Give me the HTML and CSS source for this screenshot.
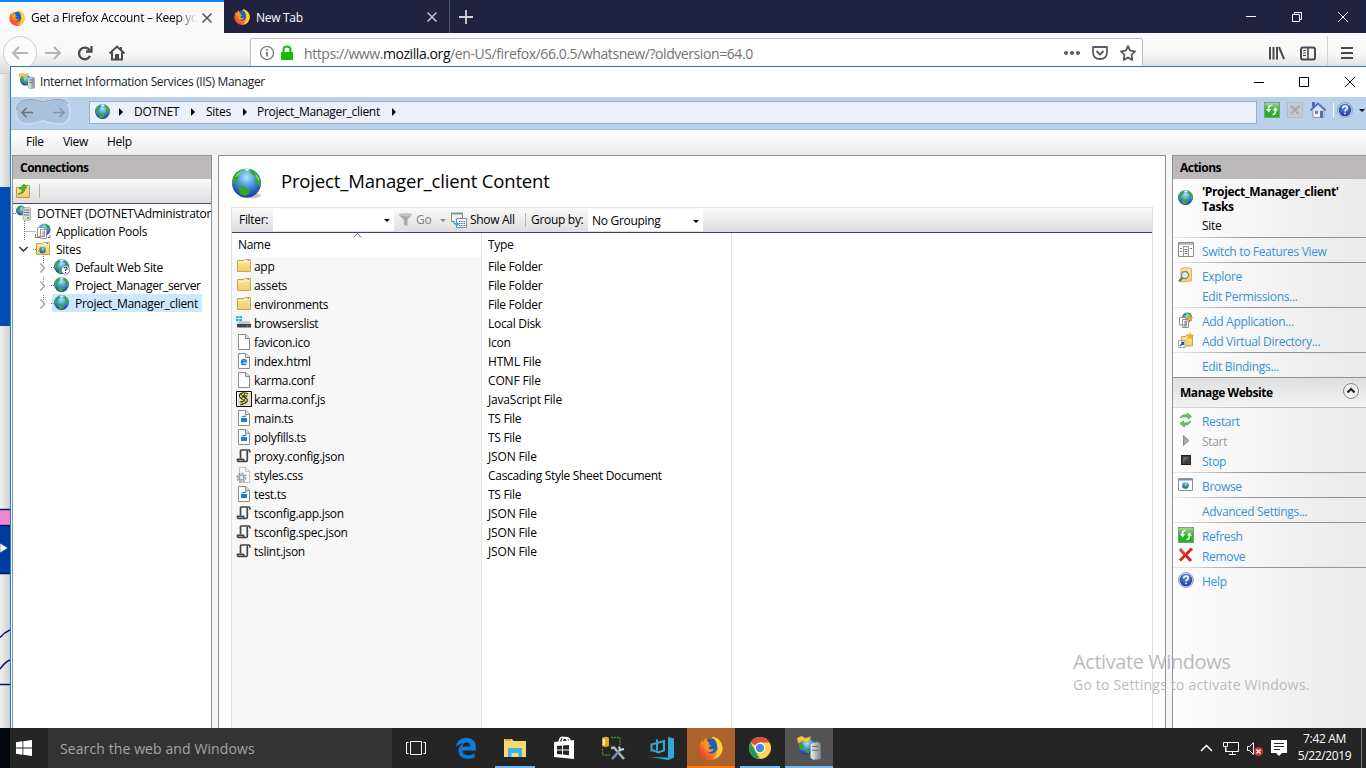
FILE: index.html
```html
<!DOCTYPE html>
<html lang="en">
<head>
<meta charset="utf-8">
<title>Internet Information Services (IIS) Manager</title>
<link rel="stylesheet" href="styles.css">
</head>
<body>
<svg class="defs" width="0" height="0" aria-hidden="true">
  <defs>
    <radialGradient id="gSea" cx=".5" cy=".3" r=".75"><stop offset="0" stop-color="#a5e6f8"/><stop offset=".45" stop-color="#4a93dc"/><stop offset="1" stop-color="#10279a"/></radialGradient>
    <linearGradient id="gFox" x1="1" y1="0" x2="0" y2="1"><stop offset="0" stop-color="#ffe226"/><stop offset=".45" stop-color="#ff9a1c"/><stop offset="1" stop-color="#f0203c"/></linearGradient>
    <linearGradient id="gFold" x1="0" y1="0" x2="0" y2="1"><stop offset="0" stop-color="#fbe7a0"/><stop offset="1" stop-color="#f0cb6d"/></linearGradient>
    <linearGradient id="gGreen" x1="0" y1="0" x2="0" y2="1"><stop offset="0" stop-color="#a8dc9e"/><stop offset=".5" stop-color="#2fae2b"/><stop offset="1" stop-color="#14b81a"/></linearGradient>
    <radialGradient id="gHelp" cx=".5" cy=".3" r=".7"><stop offset="0" stop-color="#6d96e4"/><stop offset="1" stop-color="#14379c"/></radialGradient>
    <linearGradient id="gSrv" x1="0" y1="0" x2="1" y2="0"><stop offset="0" stop-color="#eef1f3"/><stop offset="1" stop-color="#7f898f"/></linearGradient>
  </defs>
  <symbol id="globe" viewBox="0 0 16 16"><circle cx="7.500" cy="7.500" r="7.500" fill="url(#gSea)"/><path d="M.8 6Q2 2.500 5 1L6 2.500 4.500 5 3 6.500 2.500 9.500 .8 9ZM9.500 .8Q14 2.500 14.800 7L14 10 12 8.500 11 6 11.500 4 9.500 3ZM3.500 9.500L6.500 9 10 11.500 8 14 5 14Z" fill="#3aa939"/><path d="M6 .8L9 .6 9.500 1.800 7 2.600Z" fill="#e9f9ee"/></symbol>
  <symbol id="bigglobe" viewBox="0 0 32 32"><ellipse cx="18" cy="27.500" rx="11" ry="3" fill="#c4c4c4"/><circle cx="14.500" cy="15" r="14.500" fill="url(#gSea)"/><path d="M.5 13Q1 5 9 1.500L10 4 7 7 6 11 4 15 .5 16ZM18 1Q22 2 26 7L28.500 12 28.800 17 27.500 20 26 16 23 14 24 9 21 7 18 4ZM6 19L11 18 18 22 17 26 12 28 8 26Z" fill="#37a52b"/><path d="M3 9Q6 4 10 2L9 5 5 9ZM23 5L27 10 27 13 24 9Z" fill="#7fdc4b"/><path d="M12 .8L17 .8 16 3 14 2.500Z" fill="#fff"/></symbol>
  <symbol id="server" viewBox="0 0 16 16"><circle cx="5" cy="5.500" r="5" fill="url(#gSea)"/><path d="M1 3Q3 0 6 .8L4 4 2 7ZM5 8L7 6V10L5 10Z" fill="#37a52b"/><path d="M7 3L13 2 14.500 3V15L9 16 7 14Z" fill="#d4dadd" stroke="#8b969c" stroke-width=".6"/><path d="M8 5H13.500M8 7.500H13.500M8 10H13.500" stroke="#6d7a81"/><path d="M11 13H13" stroke="#3fae39" stroke-width="1.500"/></symbol>
  <symbol id="iis" viewBox="0 0 16 16"><circle cx="6.500" cy="7" r="5.500" fill="url(#gSea)"/><path d="M1.200 6L3 4 5 7 3 10ZM5 10L8 8V12Z" fill="#37a52b"/><path d="M0 1.500L3 0 5.500 1.500 9 .3 8.500 3 6 4.500 3.500 3 1 5Z" fill="#f7c740" stroke="#c9912a" stroke-width=".4"/><path d="M9 5L13 4 15.500 5V15L11 16 9 14.500Z" fill="url(#gSrv)" stroke="#8b969c" stroke-width=".5"/><path d="M10 7H14M10 9.500H14" stroke="#5f6d75" stroke-width=".8"/></symbol>
  <symbol id="fox" viewBox="0 0 16 16"><path d="M9.500 .3Q15.700 2.500 15.700 8.300A7.700 7.500 0 0 1 .3 8.500Q.2 5 2 2.500L2.800 4Q3.500 2 5 1.300 5 3 6 3.500Z" fill="url(#gFox)"/><path d="M5.500 2.800Q7.500 .8 10.500 2.300 13 5 12.300 8.500 11.300 11.500 8.300 11.800 5.500 11.500 4.800 8.500Z" fill="#1c5fc4"/><path d="M2.800 4.200L5 3.600 6.800 4 6.300 5.600 8.300 6.300 6.300 7.600 7 9 9.800 8.700Q9 11.300 6 10.500 3.300 9 2.800 4.200Z" fill="#ff9520"/><path d="M9.500 .3Q16.200 3 15.600 9 14.300 14.800 9 15.700 12.800 12.500 12.500 8 12 4 9.500 .3Z" fill="#ffd032"/></symbol>
  <symbol id="folder" viewBox="0 0 16 16"><path d="M1.500 2.500H8L9 1.500H14.500V13.500H1.500Z" fill="url(#gFold)" stroke="#cda447"/><path d="M9.500 2.500H14" stroke="#fff"/><path d="M11.500 2.500H13" stroke="#4a90c4"/><path d="M2 4.500H8.500L10 3.500H14" stroke="#fdf3c9" fill="none"/></symbol>
  <symbol id="file" viewBox="0 0 16 16"><path d="M2.500 .5H10L13.500 4V15.500H2.500Z" fill="#fff" stroke="#8b8b8b"/><path d="M9.500 .5V4.500H13.500" fill="#ddd" stroke="#8b8b8b"/></symbol>
  <symbol id="html" viewBox="0 0 16 16"><use href="#file"/><path d="M5.300 8.700H10.300Q10 6.500 8 6.500 6 6.500 5.600 8.700 5.600 11.500 8 11.500 9.300 11.500 10.200 10.800" fill="none" stroke="#147fd7" stroke-width="1.700"/></symbol>
  <symbol id="ts" viewBox="0 0 16 16"><use href="#file"/><path d="M5 8H11V12H5ZM4.800 6.700L10.500 5.300V6.600L6.800 7.400Z" fill="#147fd7"/></symbol>
  <symbol id="json" viewBox="0 0 16 16"><path d="M4.500 10.500V3Q4.500 2 6 2H13Q14 2 14 4.500" fill="none" stroke="#444" stroke-width="1.700"/><path d="M11.300 2.500V12Q11.300 13.500 10 13.500H2.500Q1.500 13.500 1.500 11.300H7.500Q7.500 13.500 9 13.500" fill="none" stroke="#444" stroke-width="1.700"/></symbol>
  <symbol id="js" viewBox="0 0 16 16"><path d="M.5 .5H15.500V15.500H.5Z" fill="#e5e2d4" stroke="#111"/><path d="M1.500 14.500V1.500H14.500" fill="none" stroke="#fff"/><path d="M11.500 4Q5 2 5 5 6 7 9.500 8.500 11 11 4 12.500" fill="none" stroke="#222" stroke-width="4"/><path d="M11.500 4Q5 2 5 5 6 7 9.500 8.500 11 11 4 12.500" fill="none" stroke="#e8df2e" stroke-width="2" stroke-dasharray="2.500 .7"/></symbol>
  <symbol id="css" viewBox="0 0 16 16"><path d="M3.500 .5H10L13.500 4V15.500H3.500Z" fill="#fafafa" stroke="#c0c0c0"/><path d="M9.500 .5V4.500H13.500" fill="#eee" stroke="#c0c0c0"/><circle cx="5.500" cy="10.500" r="4.300" fill="none" stroke="#929ba1" stroke-width="1.500" stroke-dasharray="2 1.300"/><circle cx="5.500" cy="10.500" r="2.600" fill="#e5eaed" stroke="#929ba1" stroke-width="1.400"/></symbol>
  <symbol id="disk" viewBox="0 0 16 16"><path d="M0 1H2.500V3.300H0ZM3.300 1H6V3.300H3.300ZM0 4H2.500V6.200H0ZM3.300 4H6V6.200H3.300Z" fill="#16b8ee"/><path d="M3 6H13L15 9H1Z" fill="#c9c9c9"/><path d="M1 9H15V12.500H1Z" fill="#454545"/><path d="M10.500 11H12.500" stroke="#46e04a"/></symbol>
  <symbol id="refresh" viewBox="0 0 16 16"><rect x=".5" y=".5" width="15" height="15" fill="url(#gGreen)" stroke="#7e9c84"/><path d="M7.500 3.300Q4 3.500 4.700 7.500M8.500 12.500Q12 12.500 11.300 8" fill="none" stroke="#fff" stroke-width="1.700"/><path d="M1.800 7L4.800 10.500 7.300 7ZM8.700 8.500L11.300 5.300 14.200 8.500Z" fill="#fff"/></symbol>
  <symbol id="help" viewBox="0 0 16 16"><circle cx="8" cy="8" r="7.500" fill="#dce4f2" stroke="#7682a0" stroke-width=".7"/><circle cx="8" cy="8" r="6.300" fill="url(#gHelp)"/><path d="M5.700 6.200Q5.800 4 8 4 10.300 4 10.300 6 10.300 7.300 8.800 8 8 8.500 8 9.500M8 10.800V12.300" fill="none" stroke="#fff" stroke-width="1.500"/></symbol>
</svg>

<main class="desktop">
  <section class="firefox">
    <div class="tabs">
      <div class="tab active"><svg class="i16"><use href="#fox"/></svg><span class="tab-title fade">Get a Firefox Account – Keep yo</span><svg class="tab-x" viewBox="0 0 10 10"><path d="M.5 .5L9.500 9.500M9.500 .5L.5 9.500"/></svg></div>
      <div class="tab second"><svg class="i16"><use href="#fox"/></svg><span class="tab-title">New Tab</span><svg class="tab-x" viewBox="0 0 10 10"><path d="M.5 .5L9.500 9.500M9.500 .5L.5 9.500"/></svg></div>
      <svg class="plus" viewBox="0 0 14 14"><path d="M7 0V14M0 7H14"/></svg>
      <svg class="fx-controls" viewBox="0 0 110 14"><path d="M0 6.500H10M46.500 4.500H53.500V11.500H46.500ZM48.500 4V2.500H55.500V9.500H54M92 2L102 12M102 2L92 12"/></svg>
    </div>
    <div class="fx-toolbar">
      <svg class="fx-nav" viewBox="0 0 130 34"><circle cx="20" cy="20" r="16.500" fill="#fbfbfb" stroke="#cfcfcf"/><path d="M28 20H13M19 14L13 20 19 26M45 20H60M54 14L60 20 54 26" fill="none" stroke="#b5b5b7" stroke-width="2"/><path d="M89.500 17A5.800 5.800 0 1 0 90 23M91.500 13V18.500H86" fill="none" stroke="#4a4a4f" stroke-width="2.300"/><path d="M109.500 20.500L117 13.500 124.500 20.500M112 19V26.500H122V19M121 14V17" fill="none" stroke="#4a4a4f" stroke-width="2"/><path d="M115 21H119V26H115Z" fill="#4a4a4f"/></svg>
      <div class="urlbar">
        <svg class="url-left" viewBox="0 0 36 16"><circle cx="7" cy="8" r="6.500" fill="none" stroke="#6b6b6f" stroke-width="1.200"/><path d="M7 7V11.500M7 4V5.500" stroke="#55555a" stroke-width="1.500"/><path d="M21 7H33V15H21Z" fill="#12bc00"/><path d="M23.500 8V5Q23.500 1.500 27 1.500T30.500 5V8" fill="none" stroke="#12bc00" stroke-width="2"/></svg>
        <span class="url">https://www.<b>mozilla.org</b>/en-US/firefox/66.0.5/whatsnew/?oldversion=64.0</span>
        <svg class="url-right" viewBox="0 0 74 18"><g fill="#5a5a5e"><circle cx="3" cy="8" r="2"/><circle cx="9" cy="8" r="2"/><circle cx="15" cy="8" r="2"/></g><path d="M30 2H44V7Q44 14 37 14T30 7ZM33.500 6L37 9.500 40.500 6M65 1L67.200 5.700 72 6.400 68.500 9.900 69.300 14.900 65 12.500 60.700 14.900 61.500 9.900 58 6.400 62.800 5.700Z" fill="none" stroke="#5a5a5e" stroke-width="1.800" stroke-linejoin="round"/></svg>
      </div>
      <svg class="fx-right" viewBox="0 0 98 34"><path d="M2 14V26.500M5.500 14V26.500M9 14V26.500M11 14L16 26" fill="none" stroke="#4a4a4f" stroke-width="2"/><rect x="33" y="14.500" width="14" height="12" rx="2" fill="none" stroke="#4a4a4f" stroke-width="2"/><path d="M40 14V26" stroke="#4a4a4f" stroke-width="1.600"/><path d="M35 17.500H38M35 20H38M35 22.500H38" stroke="#4a4a4f"/><path d="M59.500 3V34" stroke="#d2d2d3"/><path d="M73 15H85M73 20H85M73 25H85" stroke="#4a4a4f" stroke-width="2"/></svg>
    </div>
    <svg class="webpage" viewBox="0 0 10 655">
      <defs><linearGradient id="gShade"><stop offset="0" stop-color="#f1f1f1"/><stop offset="1" stop-color="#cfcfd1"/></linearGradient></defs>
      <path d="M0 0H10V655H0Z" fill="url(#gShade)"/><path d="M0 .5H10" stroke="#c9c9c9"/>
      <path d="M0 114H10V253H0Z" fill="#004db3"/><path d="M0 436H10V452H0Z" fill="#ee87d3"/><path d="M0 452H10V501H0Z" fill="#003c9c"/>
      <path d="M0 436.500H10M0 452.500H10M0 500.500H10M0 611.500H10" stroke="#00156c" stroke-width="1.500"/><path d="M0 470L8 475 0 480Z" fill="#fff" stroke="#00156c" stroke-width=".5"/>
      <path d="M0 564.500Q5 559 10 557M0 596Q5 589 10 587" fill="none" stroke="#00156c" stroke-width="1.500"/>
    </svg>
  </section>

  <section class="iis">
    <header class="titlebar"><svg class="i16"><use href="#iis"/></svg><span class="title-text">Internet Information Services (IIS) Manager</span><svg class="win-controls" viewBox="0 0 102 12"><path d="M0 6.500H10M45.500 1.500H54.500V10.500H45.500ZM91 1L101 11M101 1L91 11"/></svg></header>
    <div class="addressbar">
      <svg class="navpill" viewBox="0 0 56 28"><path d="M14 1Q20 1 28 4 36 1 45 1 55 2 55 14 55 26 44 26 36 26 28 23 19 26 12 26 1 26 1 14 1 2 14 1Z" fill="#a9c0da" stroke="#c9daec" stroke-width="2"/><path d="M1.500 12Q2 2 14 1.500 20 1 28 4 36 1 45 1.500 51 2 53 6" fill="none" stroke="#8199b5"/><path d="M18 14.500H7M11.500 10L7 14.500 11.500 19" fill="none" stroke="#6a7178" stroke-width="1.700"/><path d="M38 14.500H49M44.500 10L49 14.500 44.500 19" fill="none" stroke="#8798a8" stroke-width="1.700"/></svg>
      <nav class="crumbs"><svg class="i16"><use href="#globe"/></svg><i></i><span class="c1">DOTNET</span><i></i><span class="c2">Sites</span><i></i><span class="c3">Project_Manager_client</span><i></i></nav>
      <div class="addr-tools">
        <svg class="i16"><use href="#refresh"/></svg>
        <svg class="i16" viewBox="0 0 16 16"><rect x=".5" y=".5" width="15" height="15" fill="#c6cbd0" stroke="#b2bcc5"/><path d="M4 4L12 12M12 4L4 12" stroke="#9fa7ad" stroke-width="2.500" stroke-dasharray="2 .6"/></svg>
        <svg class="i16 home" viewBox="0 0 16 16"><path d="M3 8H14V15.500H3Z" fill="#f2f2f6" stroke="#9299b5"/><path d="M3.500 0V6" stroke="#4257b0" stroke-width="2.500"/><path d="M.5 8.500L8 1.500 15.500 8.500" fill="#dfe4f4" stroke="#5870bd" stroke-width="2"/><path d="M5 9H8V12H5Z" fill="#7b8598"/><path d="M10 9H13V15.500H10Z" fill="#4772aa"/></svg>
        <em></em><svg class="i16"><use href="#help"/></svg><b></b>
      </div>
    </div>
    <div class="menubar"><span>File</span><span>View</span><span>Help</span></div>
    <div class="panes">
      <aside class="connections">
        <h2>Connections</h2>
        <div class="conn-tools"><svg class="i16" viewBox="0 0 16 16"><path d="M.5 4.500H6L7 2.500H13.500V14.500H.5Z" fill="url(#gFold)" stroke="#b79b4d"/><path d="M2 11Q7 10 6 6H3L8 1 11 5H9Q9 11 2 11Z" fill="#47bd2d" stroke="#287a24" stroke-width=".6"/></svg><i></i></div>
        <div class="tree">
          <svg class="guides" viewBox="0 0 50 110"><path d="M0 9.500H5M11.500 17V36M11.500 27.500H23M20 45.500H24M30.500 48V60M38 63.500H41M30.500 73V78M38 81.500H41M30.500 91V96M38 99.500H41" stroke="#777" stroke-dasharray="1 1" fill="none"/><path d="M6.500 43L10.500 47 14.500 43" fill="none" stroke="#404040" stroke-width="1.700"/><path d="M27.500 59.500L31.500 64 27.500 68.500M27.500 77.500L31.500 82 27.500 86.500M27.500 95.500L31.500 100 27.500 104.500" fill="none" stroke="#a6a6a6" stroke-width="1.600"/></svg>
          <div class="node lv0"><svg class="i16"><use href="#server"/></svg><span>DOTNET (DOTNET\Administrator)</span></div>
          <div class="node lv1"><svg class="i16" viewBox="0 0 16 16"><circle cx="9.500" cy="6.500" r="6" fill="url(#gSea)"/><path d="M10 1L15 4V7L11 4Z" fill="#37a52b"/><path d="M2.500 4.500H9.500V13.500H2.500ZM5.500 6.500H11.500V15.500H5.500Z" fill="#fff" stroke="#999"/><path d="M7 9H10M7 11H10M7 13H10" stroke="#888"/><path d="M.5 11V14.500H5M13 14.500H15V12" fill="none" stroke="#c85b4b"/></svg><span>Application Pools</span></div>
          <div class="node lv1"><svg class="i16"><use href="#folder"/><circle cx="7.500" cy="9" r="3.200" fill="url(#gSea)"/><path d="M5 8L7 6 7 10ZM8 11L10 8 10 11Z" fill="#37a52b"/></svg><span>Sites</span></div>
          <div class="node lv2"><svg class="i16"><use href="#globe"/><circle cx="11.500" cy="11" r="4.300" fill="#fff" stroke="#6c7ea5"/><path d="M9.900 9.500Q10 8.200 11.500 8.300 13.300 8.300 13 10L11.500 11V12M11.500 13V14" fill="none" stroke="#173c9c" stroke-width="1.100"/></svg><span>Default Web Site</span></div>
          <div class="node lv2 tight"><svg class="i16"><use href="#globe"/></svg><span>Project_Manager_server</span></div>
          <div class="node lv2 selected"><svg class="i16"><use href="#globe"/></svg><span>Project_Manager_client</span></div>
        </div>
      </aside>

      <article class="content">
        <header class="content-head"><svg class="big"><use href="#bigglobe"/></svg><h1>Project_Manager_client Content</h1></header>
        <div class="list">
          <div class="filterbar">
            <span class="f-label">Filter:</span><div class="combo filter"><b></b></div>
            <svg class="i16 funnel" viewBox="0 0 16 16"><path d="M1 3L14 2 9.500 8V14L6 13V8Z" fill="#aaa"/><ellipse cx="7.500" cy="2.700" rx="6.700" ry="1.600" fill="#c5c5c5"/></svg><span class="go">Go</span><b class="dim"></b>
            <svg class="i16 showicon" viewBox="0 0 16 16"><path d="M.5 1.500H11.500V6M.5 1.500V9.500H4" fill="#f1f3f4" stroke="#7e929d"/><path d="M0 1.500H12" stroke="#7e929d" stroke-width="2"/><path d="M5.500 6.500H15.500V15.500H5.500Z" fill="#f5f8fa" stroke="#79909d"/><path d="M8 9.500H14M8 11.500H14M8 13.500H14" stroke="#455ba6" stroke-dasharray="1.300 1"/><path d="M1.500 7Q2 11 5 11V9L8.500 12 5 15V13Q1 12 1.500 7Z" fill="#37a9e0"/></svg><span class="showall">Show All</span><em></em><span class="group">Group by:</span><div class="combo grouping"><span>No Grouping</span><b></b></div>
          </div>
          <div class="colhead"><span>Name</span><span>Type</span><svg class="sort" viewBox="0 0 9 5"><path d="M.5 4.500L4.500 .5 8.500 4.500"/></svg></div>
          <div class="columns">
            <div class="col names">
              <div><svg class="i16"><use href="#folder"/></svg>app</div>
              <div><svg class="i16"><use href="#folder"/></svg>assets</div>
              <div><svg class="i16"><use href="#folder"/></svg>environments</div>
              <div><svg class="i16"><use href="#disk"/></svg>browserslist</div>
              <div><svg class="i16"><use href="#file"/></svg>favicon.ico</div>
              <div><svg class="i16"><use href="#html"/></svg>index.html</div>
              <div><svg class="i16"><use href="#file"/></svg>karma.conf</div>
              <div><svg class="i16"><use href="#js"/></svg>karma.conf.js</div>
              <div><svg class="i16"><use href="#ts"/></svg>main.ts</div>
              <div><svg class="i16"><use href="#ts"/></svg>polyfills.ts</div>
              <div><svg class="i16"><use href="#json"/></svg>proxy.config.json</div>
              <div><svg class="i16"><use href="#css"/></svg>styles.css</div>
              <div><svg class="i16"><use href="#ts"/></svg>test.ts</div>
              <div><svg class="i16"><use href="#json"/></svg>tsconfig.app.json</div>
              <div><svg class="i16"><use href="#json"/></svg>tsconfig.spec.json</div>
              <div><svg class="i16"><use href="#json"/></svg>tslint.json</div>
            </div>
            <div class="col types">
              <div>File Folder</div><div>File Folder</div><div>File Folder</div><div>Local Disk</div><div>Icon</div><div class="wide">HTML File</div><div class="wide">CONF File</div><div class="wide">JavaScript File</div><div>TS File</div><div>TS File</div><div class="wide">JSON File</div><div>Cascading Style Sheet Document</div><div>TS File</div><div class="wide">JSON File</div><div class="wide">JSON File</div><div class="wide">JSON File</div>
            </div>
          </div>
        </div>
      </article>

      <aside class="actions">
        <h2>Actions</h2>
        <div class="task-head"><svg class="i16"><use href="#globe"/></svg><div><strong>'Project_Manager_client'<br>Tasks</strong><span>Site</span></div></div>
        <div class="grp"><a><svg class="i16" viewBox="0 0 16 16"><path d="M.5 .5H15.500V14.500H.5Z" fill="#fff" stroke="#8b8b8b"/><path d="M1 2H15" stroke="#b4bccb" stroke-width="2"/><path d="M5 4.500H11M5.500 4V14M10.500 4V14" stroke="#999"/><path d="M2 6.500H4M2 9.500H4M6.500 7.500H9.500M6.500 9.500H9.500M6.500 11.500H9.500M12 6.500H14" stroke="#777"/></svg>Switch to Features View</a></div>
        <div class="grp"><a><svg class="i16" viewBox="0 0 16 16"><path d="M3 1.500L8 .5 13.500 1.500V14L3 15Z" fill="url(#gFold)" stroke="#d7b654"/><circle cx="7" cy="8" r="3.500" fill="#d9edf5" stroke="#7f878c" stroke-width="1.300"/><path d="M4.500 10.500L1 14.500" stroke="#777" stroke-width="2.500"/></svg>Explore</a><a>Edit Permissions...</a></div>
        <div class="grp"><a><svg class="i16" viewBox="0 0 16 16"><circle cx="9" cy="5.500" r="5" fill="url(#gSea)"/><path d="M5 2.500L8 .8 8 3 5 5ZM9 1L12 1 13 4Z" fill="#37a52b"/><path d="M1.500 5.500H8V13H1.500ZM4.500 7.500H10.500V15.500H4.500Z" fill="#fff" stroke="#909090"/><path d="M6 10H9M6 12H9M6 14H9" stroke="#777"/><path d="M11.500 2.500L12.300 5 15.500 5 13.300 7 14.500 10 11.500 8.300 9 10 9.800 7 7.500 5 10.500 5Z" fill="#f6aa24"/></svg>Add Application...</a><a><svg class="i16" viewBox="0 0 16 16"><path d="M3.500 4.500H8L9 3H14.500V14H3.500Z" fill="url(#gFold)" stroke="#caa34b"/><path d="M12 0L13 3 16 3 14 5 15 8 12 6 9 7 10 4 8 2 11 3Z" fill="#f6aa24"/><path d="M.5 8.500H7V15.500H.5Z" fill="#fff" stroke="#a8a8a8"/><path d="M2 14L5 11M3 10.500H5.500V13" stroke="#304f9c" stroke-width="1.300" fill="none"/></svg>Add Virtual Directory...</a></div>
        <div class="grp"><a>Edit Bindings...</a></div>
        <div class="manage"><strong>Manage Website</strong><svg viewBox="0 0 16 16"><circle cx="8" cy="8" r="7.500" fill="#f0f0f0" stroke="#858585"/><path d="M4.500 9.500L8 6 11.500 9.500" fill="none" stroke="#222" stroke-width="2"/></svg></div>
        <div class="grp first"><a><svg class="i16" viewBox="0 0 16 16"><path d="M2 6Q4 2 9 3V1L13.500 4.500 10 7V5Q5 4 2 6ZM13 9Q11 13.500 6.500 13V15L2 11.500 5.500 9V11Q10 11.500 13 9Z" fill="#67cf52" stroke="#34a73e" stroke-width=".7"/></svg>Restart</a><a class="disabled"><svg class="i16" viewBox="0 0 16 16"><path d="M5.500 3.500L11 8.500 5.500 13.500Z" fill="#aaa" stroke="#8d8d8d"/></svg>Start</a><a><svg class="i16" viewBox="0 0 16 16"><rect x="3.500" y="3.500" width="9" height="9" fill="#404040" stroke="#222"/><path d="M5 5L11 5 5 11Z" fill="#626262"/></svg>Stop</a></div>
        <div class="grp"><a><svg class="i16" viewBox="0 0 16 16"><path d="M.5 1.500H14.500V13.500H.5Z" fill="#fff" stroke="#8093a8"/><path d="M1 2.500H14" stroke="#7d8fa4" stroke-width="2"/><circle cx="7.500" cy="8.500" r="3.300" fill="url(#gSea)"/><path d="M5 8L7 6V10ZM8 11L10 7 10 11Z" fill="#37a52b"/></svg>Browse</a></div>
        <div class="grp"><a>Advanced Settings...</a></div>
        <div class="grp"><a><svg class="i16"><use href="#refresh"/></svg>Refresh</a><a><svg class="i16" viewBox="0 0 16 16"><path d="M2 2L13 14M14 1.500L2 13.500" stroke="#d9241d" stroke-width="3"/><path d="M2 1.500L8 7" stroke="#f28269"/></svg>Remove</a></div>
        <div class="grp"><a><svg class="i16"><use href="#help"/></svg>Help</a></div>
      </aside>
    </div>
  </section>

  <div class="watermark"><p class="w1">Activate Windows</p><p class="w2">Go to Settings to activate Windows.</p></div>

  <footer class="taskbar">
    <div class="start"><svg viewBox="0 0 16 16"><path d="M0 2.300L6.500 1.300V7.500H0ZM7.300 1.200L16 0V7.500H7.300ZM0 8.400H6.500V14.700L0 13.700ZM7.300 8.400H16V16L7.300 14.800Z" fill="#fff"/></svg></div>
    <div class="search">Search the web and Windows</div>
    <div class="apps">
      <div class="app"><svg viewBox="0 0 24 24"><path d="M6.500 5.500H17.500V18.500H6.500ZM4.500 6.500H2.500V17.500H4.500M19.500 6.500H21.500V17.500H19.500" fill="none" stroke="#f5f5f5"/></svg></div>
      <div class="app"><svg viewBox="0 0 24 24"><path d="M2 11Q3 2 12 1.700 22 2 22 12.500V14.500H8.500Q8.500 19 14 19.200 18 19.200 20.500 17.500V21.500Q17 23 13 22.800 4 22 4.500 14 5 9.500 9 7.500 5 7.500 2 11ZM8.500 10.500H16Q16 6 12 6.500 8.500 7 8.500 10.500Z" fill="#0f7bd8"/></svg></div>
      <div class="app running"><svg viewBox="0 0 24 24"><path d="M1 3H9L10.500 5H23V21H1Z" fill="#f8d775"/><path d="M2 4H8" stroke="#e2a728" stroke-width="2"/><path d="M5 12H19V21H15.500V17H8.500V21H5Z" fill="#36b7e9"/></svg></div>
      <div class="app"><svg viewBox="0 0 24 24"><path d="M2 6L22 4V23L2 21Z" fill="#fff"/><path d="M7 6Q8 0 12 1.500 15 2 15.500 5M10 5Q12 0 16 2 18 3 18 5" fill="none" stroke="#fff" stroke-width="1.500"/><path d="M5 10L10 9.500V13.500H5ZM11 9.500L17 9V13.500H11ZM5 14.500H10V18.500L5 18ZM11 14.500H17V19.200L11 18.600Z" fill="#252525"/></svg></div>
      <div class="app"><svg viewBox="0 0 24 24"><path d="M1 2Q5-.5 8 2V10Q4 12 1 10Z" fill="#e4a923"/><path d="M3 3V9" stroke="#fff0a9" stroke-width="2"/><path d="M10 1.500H19V9M1.500 13V19H9" fill="none" stroke="#428a37" stroke-width="1.300" stroke-dasharray="2 1"/><path d="M10 12L13 11.500 23 23" fill="none" stroke="#aeb6bd" stroke-width="2.500"/><path d="M20 13L11 23" stroke="#7f8fb0" stroke-width="2.500"/><path d="M18 10.500L19 14 23 13" fill="none" stroke="#cbd5de" stroke-width="2"/></svg></div>
      <div class="app"><svg viewBox="0 0 24 24"><path d="M18 1L24 2.500V21.500L18.500 24 0 21 18 21.500Z" fill="#30a9d3"/><path d="M7 3.500V14.500M4 14.500H1.500V8.500L14 5V14.500L8 16.500 4 14.500" fill="none" stroke="#30a9d3" stroke-width="2"/></svg></div>
      <div class="app firefox-app"><svg><use href="#fox"/></svg></div>
      <div class="app running"><svg viewBox="0 0 24 24"><circle cx="12" cy="12" r="11" fill="#ffd44b"/><path d="M12 12L2.500 6.500Q6 1 12 1 18 1 21.500 6.500H12Z" fill="#de4b3c"/><path d="M2.500 6.500L12 23Q1 22 1 12 1 9 2.500 6.500Z" fill="#26985a"/><path d="M16.500 14.500L12 23 8 15Z" fill="#ffd44b"/><circle cx="12" cy="12" r="5.400" fill="#fff"/><circle cx="12" cy="12" r="4.200" fill="#4688e9"/></svg></div>
      <div class="app running current"><svg><use href="#iis"/></svg></div>
    </div>
    <div class="tray"><svg viewBox="0 0 88 18"><path d="M1 12L6.500 6.500 12 12" fill="none" stroke="#fff" stroke-width="1.500"/><path d="M28 3.500H38.500V12.500H26V9M32.500 12.500V15.500M29 15.500H36M23.500 3.500H27.500V7.500H23.500ZM25.500 8V12.500H28" fill="none" stroke="#fff"/><path d="M47.500 7.500H49.500L53.500 3.500V15.500L49.500 11.500H47.500Z" fill="none" stroke="#fff"/><circle cx="58.500" cy="12.500" r="4.500" fill="#d92e37"/><path d="M56.500 10.500L60.500 14.500M60.500 10.500L56.500 14.500" stroke="#fff" stroke-width="1.200"/><path d="M71 1H87V14H82L79 17 76 14H71Z" fill="#fff"/><path d="M74 4.500H84M74 7.500H84M74 10.500H80" stroke="#262626"/></svg></div>
    <div class="clock"><span>7:42 AM</span><span>5/22/2019</span></div><i class="peek"></i>
  </footer>
</main>
</body>
</html>
```
FILE: styles.css
```css
* { box-sizing: border-box; }
body { margin: 0; overflow: hidden; font: 12px/18px "Open Sans", "Noto Sans", sans-serif; letter-spacing: -0.3px; color: #000; }
h1, h2, p { margin: 0; font-weight: normal; }
svg { flex: none; display: block; }
.defs { position: absolute; }
.i16 { width: 16px; height: 16px; }
.desktop { position: relative; width: 1366px; height: 768px; overflow: hidden; white-space: nowrap; background: #fff; }

/* browser behind */
.firefox { position: absolute; inset: 0; }
.tabs { height: 33px; background: #20223f; display: flex; align-items: center; }
.tab { height: 33px; display: flex; align-items: center; padding-top: 1px; }
.active { width: 224px; background: #f9f9fa; border-top: 2px solid #0a84ff; padding: 0 12px 0 9px; }
.second { width: 226px; color: #fff; border-right: 1px solid #53546b; padding-left: 10px; padding-right: 12px; }
.tab-title { flex: 1; margin-left: 6px; overflow: hidden; padding-top: 1px; }
.fade { -webkit-mask-image: linear-gradient(90deg, #000 88%, transparent); mask-image: linear-gradient(90deg, #000 88%, transparent); margin-right: 5px; }
.tab-x { width: 10px; height: 10px; fill: none; stroke: #505055; stroke-width: 1.5; }
.second .tab-x { stroke: #c5c5cc; }
.plus { width: 14px; height: 14px; margin-left: 9px; stroke: #d3d3d9; stroke-width: 1.8; }
.fx-controls { width: 110px; height: 14px; margin-left: auto; margin-right: 10px; fill: none; stroke: #fff; }
.fx-toolbar { height: 40px; display: flex; background: linear-gradient(#f9f9fa 50%, #dedede 90%); }
.fx-nav { width: 130px; height: 34px; }
.urlbar { width: 893px; height: 34px; margin: 5px 0 0 120px; border: 1px solid #bcbcbe; background: #fff; display: flex; align-items: flex-start; padding: 6px 5px 0 9px; border-radius: 2px; }
.url-left { width: 36px; height: 16px; }
.url { font-size: 14px; line-height: 18px; margin-left: 8px; color: #737373; letter-spacing: -.42px; }
.url b { font-weight: normal; color: #0c0c0d; }
.url-right { width: 74px; height: 18px; margin-left: auto; }
.fx-right { width: 98px; height: 34px; margin-left: 125px; }
.webpage { width: 10px; height: 655px; }

/* management console */
.iis { position: absolute; left: 10px; top: 66px; width: 1356px; height: 702px; border: solid #1b80d2; border-width: 1px 0 0 1px; background: #f6f6f6; display: flex; flex-direction: column; }
.titlebar { height: 30px; background: #fff; display: flex; align-items: center; padding: 0 10px 0 8px; flex: none; }
.titlebar .i16 { margin-top: -2px; }
.title-text { margin-left: 5px; color: #222; letter-spacing: -.34px; }
.win-controls { width: 102px; height: 12px; margin-left: auto; fill: none; stroke: #000; }
.addressbar { height: 33px; flex: none; background: #b9d1ea; border-bottom: 1px solid #a9bdd2; display: flex; align-items: flex-start; }
.navpill { width: 56px; height: 28px; margin: 1px 0 0 4px; }
.crumbs { width: 1168px; height: 23px; margin: 4px 0 0 18px; background: #eaf1fa; border: 1px solid #98b0cb; display: flex; align-items: center; padding: 0 0 2px 5px; }
.crumbs span { margin: 0 10px; }
.crumbs i { border: 4px solid transparent; border-left-color: #000; border-right: 0; width: 4px; margin-top: 1px; }
.crumbs i:nth-of-type(1) { margin-left: 8px; }
.crumbs .c1 { width: 47px; margin-left: 11px; }
.crumbs .c2 { width: 27px; margin-left: 11px; }
.crumbs .c3 { width: 125px; }
.addr-tools { display: flex; align-items: center; height: 26px; margin-left: 7px; gap: 7px; }
.addr-tools em { width: 1px; height: 14px; background: #fff; margin-right: -4px; }
b { font-weight: normal; }
.addr-tools > b, .combo b, .dim { width: 6px; height: 3px; border: 3px solid transparent; border-top-color: #000; border-bottom: 0; flex: none; }
.addr-tools > b { margin-left: -1px; }
.menubar { height: 25px; flex: none; display: flex; align-items: center; padding-bottom: 1px; background: linear-gradient(#fff, #ececec); }
.menubar span { margin-left: 15px; width: 22px; }
.menubar span:nth-child(3) { margin-left: 22px; }
.panes { display: flex; flex: 1; min-height: 0; padding-left: 1px; }
h2 { height: 23px; font-size: 12px; line-height: 24px; font-weight: bold; background: #bcb9bb; padding-left: 7px; letter-spacing: -.52px; }
.connections { width: 200px; border: 1px solid #929292; background: #fff; margin-right: 6px; overflow: hidden; }
.conn-tools { height: 25px; background: linear-gradient(#f9f9f9, #e0dede); border-bottom: 1px solid #48486f; display: flex; align-items: center; padding-left: 3px; }
.conn-tools i { width: 1px; height: 14px; background: #b9b6a0; margin-left: 7px; }
.tree { position: relative; }
.guides { position: absolute; left: 0; top: 0; width: 50px; height: 110px; }
.node { height: 18px; display: flex; align-items: center; }
.node span { margin-left: 4px; padding: 1px 4px 0 1px; }
.node svg { margin-top: -1px; }
.lv0 { padding-left: 3px; }
.lv1 { padding-left: 22px; }
.lv2 { padding-left: 41px; }
.tight span { letter-spacing: -.4px; }
.selected { background: #cce8ff; margin-left: 39px; padding-left: 2px; width: 150px; }
.content { width: 948px; border: 1px solid #929292; background: #fff; padding: 0 12px; margin-right: 6px; display: flex; flex-direction: column; }
.content-head { height: 51px; display: flex; align-items: flex-start; padding-top: 12px; }
.big { width: 32px; height: 32px; margin-left: 1px; }
h1 { font-size: 18.5px; line-height: 28px; margin: -1px 0 0 17px; letter-spacing: -.16px; }
.list { flex: 1; border: solid #dedfe5; border-width: 1px 1px 0; display: flex; flex-direction: column; }
.filterbar { height: 25px; flex: none; background: linear-gradient(#fafafa, #dedcdf); border-bottom: 1px solid #40406c; display: flex; align-items: center; }
.f-label { width: 41px; padding-left: 7px; }
.combo { height: 22px; background: #fff; display: flex; align-items: center; justify-content: flex-end; padding-right: 4px; }
.filter { width: 121px; }
.funnel { margin-left: 4px; }
.go { width: 21px; margin-left: 2px; color: #808080; }
.dim { border-top-color: #888; margin-left: 3px; margin-right: 5px; }
.showall { margin-left: 3px; width: 49px; }
.filterbar em { height: 14px; width: 1px; background: #b9b6a0; margin: 0 5px 0 6px; }
.group { width: 57px; }
.grouping { width: 115px; justify-content: space-between; padding-left: 4px; padding-top: 2px; }
.colhead { height: 24px; flex: none; position: relative; display: flex; line-height: 24px; }
.colhead span { width: 250px; border-right: 1px solid #e5e5e5; padding-left: 6px; }
.sort { position: absolute; left: 121px; top: 0; width: 9px; height: 5px; fill: none; stroke: #777; }
.columns { display: flex; flex: 1; }
.col { width: 250px; border-right: 1px solid #e5e5e5; }
.col > div { height: 19px; display: flex; align-items: center; padding-left: 6px; padding-top: 1px; }
.col > .wide { letter-spacing: -.17px; }
.names { background: #f7f7f7; }
.names > div { padding-left: 4px; }
.names svg { margin: -2px 2px 0 0; }
.actions { flex: 1; border: solid #929292; border-width: 1px 0 0 1px; background: linear-gradient(90deg, #fdfdfd, #eaeaea); }
.task-head { height: 58px; display: flex; padding: 5px 0 0 5px; line-height: 15px; letter-spacing: -.37px; }
.task-head svg { margin-top: 6px; }
.task-head div { margin-left: 8px; }
.task-head span { display: block; line-height: 23px; letter-spacing: -.3px; }
.grp { padding: 3px 0 1px 5px; border-top: 1px solid; border-image: linear-gradient(90deg, #eee, #929292 40%) 1; }
.grp a { height: 20px; display: flex; align-items: center; color: #3393d6; padding-left: 24px; padding-top: 1px; letter-spacing: -.32px; }
.grp a:has(svg) { padding-left: 0; }
.grp svg { margin-right: 8px; margin-top: -3px; }
.grp .disabled { color: #999; }
.grp.first { border-image: linear-gradient(90deg, #ddd, #bbb 40%) 1; }
.manage { height: 30px; display: flex; align-items: center; justify-content: space-between; padding: 0 7px; background: linear-gradient(#dfdfdf, #f3f3f3); border-top: 1px solid #929292; letter-spacing: -.45px; }
.manage svg { width: 16px; height: 16px; margin-top: -3px; }

.watermark { position: absolute; left: 1073px; top: 650px; color: #bbb; }
.w1 { font-size: 20px; line-height: 24px; letter-spacing: -.42px; }
.w2 { font-size: 14px; line-height: 20px; margin-top: 1px; letter-spacing: .2px; }

.taskbar { position: absolute; left: 0; right: 0; bottom: 0; height: 40px; display: flex; color: #fff; background: linear-gradient(90deg, #03060b 10px, #252525 10px); }
.start { width: 48px; display: flex; align-items: center; padding-left: 16px; }
.start svg { width: 16px; height: 16px; }
.search { width: 344px; background: #333; color: #a5a5a5; font-size: 14px; line-height: 41px; padding-left: 12px; letter-spacing: .1px; }
.apps { display: flex; gap: 1px; padding-left: 1px; }
.app { width: 48px; height: 40px; display: flex; align-items: center; justify-content: center; position: relative; }
.app svg { width: 24px; height: 24px; }
.app:first-child svg { margin-left: -2px; }
.running::after { content: ""; position: absolute; left: 4px; right: 4px; bottom: 0; height: 2px; background: #76b9ed; }
.firefox-app { background: #ac632b; border-bottom: 2px solid #ff7b08; padding-top: 2px; }
.current { background: #535353; }
.current::after { left: 0; right: 0; }
.tray { margin-left: auto; width: 88px; padding-top: 11px; }
.tray svg { width: 88px; height: 18px; }
.clock { width: 73px; display: flex; flex-direction: column; align-items: center; line-height: 17px; padding-top: 2px; letter-spacing: -.35px; }
.peek { width: 5px; border-left: 1px solid #777; }
```
